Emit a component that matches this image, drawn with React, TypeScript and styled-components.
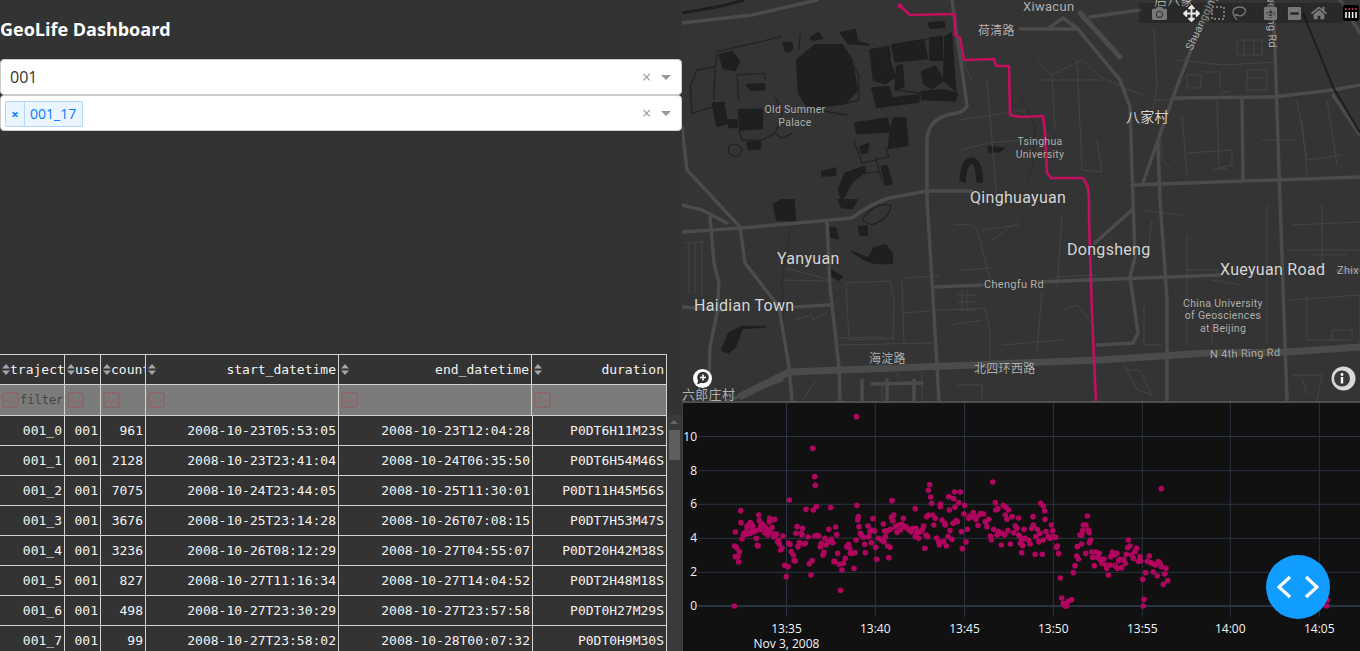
import React from 'react';
import styled, { createGlobalStyle } from 'styled-components';
import { FaCamera, FaArrowsAlt, FaPlusSquare, FaMinusSquare, FaHome } from 'react-icons/fa';

const GlobalStyle = createGlobalStyle`
  html, body {
    margin: 0;
    padding: 0;
    background: #333333;
    overflow: hidden;
  }
`

const Page = styled.div`
  position: relative;
  display: grid;
  grid-template-columns: 682px 678px;
  width: 1360px;
  height: 651px;
  overflow: hidden;
  background: #333333;
`

const LeftColumn = styled.div`
  display: flex;
  flex-direction: column;
  height: 651px;
  overflow: hidden;

  & > * {
    flex: none;
  }
`

const RightColumn = styled.div`
  display: flex;
  flex-direction: column;
  height: 651px;
  overflow: hidden;
`

const Title = styled.h1`
  margin: 0;
  height: 59px;
  padding-top: 17px;
  box-sizing: border-box;
  font-family: "Open Sans", sans-serif;
  font-size: 18px;
  line-height: 24px;
  font-weight: 700;
  color: #ffffff;
  white-space: nowrap;
`

const Dropdown = styled.div`
  display: flex;
  align-items: center;
  box-sizing: border-box;
  width: 682px;
  height: 36px;
  padding-left: 4px;
  background: #ffffff;
  border: 1px solid #cccccc;
  border-radius: 4px;
  font-family: "Open Sans", sans-serif;
`

const DropdownValue = styled.span`
  flex: 1;
  padding-left: 5px;
  font-size: 16px;
  color: #333333;
`

const TagRow = styled.div`
  flex: 1;
  display: flex;
  padding-top: 2px;
`

const Tag = styled.div`
  display: flex;
  align-items: stretch;
  height: 26px;
  box-sizing: border-box;
  border: 1px solid rgba(0, 126, 255, 0.24);
  border-radius: 2px;
  background: rgba(0, 126, 255, 0.08);
  color: #007eff;
  font-size: 14px;
  line-height: 24px;
`

const TagClear = styled.span`
  width: 18px;
  text-align: center;
  font-size: 13px;
  font-weight: 700;
  border-right: 1px solid rgba(0, 126, 255, 0.24);
`

const TagLabel = styled.span`
  padding: 0 6px 0 5px;
`

const Clear = styled.span`
  width: 17px;
  margin-right: 2px;
  text-align: center;
  font-size: 16px;
  color: #999999;
`

const Caret = styled.span`
  width: 0;
  height: 0;
  margin: 0 10px 0 4px;
  border-style: solid;
  border-width: 5px 5px 0;
  border-color: #999999 transparent transparent;
`

const TableArea = styled.div`
  display: flex;
  margin-top: 223px;
`

const Table = styled.div`
  width: 667px;
  border-top: 1px solid #d3d3d3;
  font-family: "DejaVu Sans Mono", monospace;
  font-size: 13px;
  color: #f4f4f4;
`

const Row = styled.div<{ $kind: 'head' | 'filter' | 'body' }>`
  display: grid;
  grid-template-columns: ${({ $kind }) => ($kind === 'body' ? '65px 36px 45px 193px 194px 134px' : '65px 36px 45px 193px 193px 135px')};
  box-sizing: border-box;
  height: ${({ $kind }) => ($kind === 'filter' ? '31px' : '30px')};
  border-bottom: 1px solid #d3d3d3;
  background: ${({ $kind }) => ($kind === 'filter' ? '#7b7b7b' : '#333333')};
`

const Cell = styled.div`
  box-sizing: border-box;
  padding-right: 2px;
  border-right: 1px solid #d3d3d3;
  overflow: hidden;
  line-height: 29px;
  text-align: right;
  white-space: nowrap;
`

const HeadCell = styled(Cell)`
  display: flex;
  align-items: center;
  padding-left: 2px;
`

const HeadLabel = styled.span<{ $wide: boolean }>`
  flex: ${({ $wide }) => ($wide ? 1 : 'none')};
`

const SortIcon = styled.svg`
  flex: none;
  width: 8px;
  height: 11px;
`

const FilterCell = styled(Cell)`
  display: flex;
  align-items: center;
  padding-left: 2px;
  font-size: 12px;
  color: #444444;
`

const CaseToggle = styled.span`
  flex: none;
  box-sizing: border-box;
  width: 17px;
  height: 16px;
  margin-right: 1px;
  border: 2px solid rgba(170, 60, 70, 0.3);
  border-radius: 3px;
  font-family: "Open Sans", sans-serif;
  font-size: 10px;
  line-height: 12px;
  text-align: center;
  color: rgba(170, 60, 70, 0.3);
`

const Track = styled.div`
  position: relative;
  width: 15px;
  margin-top: 61px;
  height: 240px;
  background: #3a3a3a;
`

const TrackArrow = styled.span`
  position: absolute;
  top: 5px;
  left: 3px;
  width: 0;
  height: 0;
  border-style: solid;
  border-width: 0 4px 4px;
  border-color: transparent transparent #666666;
`

const Thumb = styled.span`
  position: absolute;
  top: 15px;
  left: 2px;
  width: 11px;
  height: 30px;
  background: #5e5e5e;
`

const MapPane = styled.div`
  position: relative;
  height: 401px;
  background: #343434;
  overflow: hidden;
`

const MapCanvas = styled.svg`
  display: block;
  width: 678px;
  height: 401px;
`

const MapLabel = styled.text<{ $size: number }>`
  font-family: Roboto, "Noto Sans CJK SC", sans-serif;
  font-size: ${({ $size }) => $size}px;
  fill: ${({ $size }) => ($size > 13 ? '#d6d6d6' : '#b2b2b2')};
  stroke: #2c2c2c;
  stroke-width: 0.6px;
  paint-order: stroke;
  letter-spacing: 0.3px;
`

const ModeBar = styled.div`
  position: absolute;
  top: 3px;
  left: 457px;
  display: flex;
  align-items: center;
  width: 204px;
  height: 20px;
  background: rgba(0, 0, 0, 0.2);
`

const ModeButton = styled.span<{ $gap: number; $active?: boolean }>`
  flex: none;
  display: flex;
  align-items: center;
  justify-content: center;
  width: 21px;
  height: 20px;
  margin-left: ${({ $gap }) => $gap}px;
  font-size: 15px;
  color: ${({ $active }) => ($active ? '#e6e6e6' : '#777777')};
`

const PlotlyLogo = styled.svg`
  flex: none;
  width: 16px;
  height: 16px;
  margin-left: 14px;
`

const MapBadge = styled.svg<{ $side: 'left' | 'right' }>`
  position: absolute;
  top: ${({ $side }) => ($side === 'left' ? '369px' : '366px')};
  ${({ $side }) => ($side === 'left' ? 'left: 11px;' : 'right: 4px;')}
  width: ${({ $side }) => ($side === 'left' ? '19px' : '25px')};
  height: ${({ $side }) => ($side === 'left' ? '19px' : '25px')};
`

const ChartPane = styled.div`
  flex: 1;
  border-top: 2px solid #4f4f4f;
  border-left: 1px solid #3f3f3f;
  background: #111111;
`

const ChartCanvas = styled.svg`
  display: block;
  width: 677px;
  height: 248px;
`

const TickLabel = styled.text`
  font-family: "Open Sans", sans-serif;
  font-size: 12px;
  fill: #f2f5fa;
`

const DebugButton = styled.div`
  position: absolute;
  left: 1266px;
  top: 555px;
  display: flex;
  align-items: center;
  justify-content: center;
  width: 64px;
  height: 64px;
  border-radius: 50%;
  background: #119dff;
`

const columns = ['traject', 'use', 'count', 'start_datetime', 'end_datetime', 'duration']

const rows = [
  ['001_0', '001', '961', '2008-10-23T05:53:05', '2008-10-23T12:04:28', 'P0DT6H11M23S'],
  ['001_1', '001', '2128', '2008-10-23T23:41:04', '2008-10-24T06:35:50', 'P0DT6H54M46S'],
  ['001_2', '001', '7075', '2008-10-24T23:44:05', '2008-10-25T11:30:01', 'P0DT11H45M56S'],
  ['001_3', '001', '3676', '2008-10-25T23:14:28', '2008-10-26T07:08:15', 'P0DT7H53M47S'],
  ['001_4', '001', '3236', '2008-10-26T08:12:29', '2008-10-27T04:55:07', 'P0DT20H42M38S'],
  ['001_5', '001', '827', '2008-10-27T11:16:34', '2008-10-27T14:04:52', 'P0DT2H48M18S'],
  ['001_6', '001', '498', '2008-10-27T23:30:29', '2008-10-27T23:57:58', 'P0DT0H27M29S'],
  ['001_7', '001', '99', '2008-10-27T23:58:02', '2008-10-28T00:07:32', 'P0DT0H9M30S'],
]

// major roads, map pane pixels
const bigRoads = [
  'M270 0 L274 30 L280 70 L285 105 Q284 112 270 114 Q246 118 245 140 L245 200 L250 280 L257 401',
  'M0 23 L70 15 L135 0',
  'M0 232 L60 228 L170 218 Q190 203 207 198 L245 191 L290 191',
  'M33 200 L58 227 L63 263 L97 307 L107 367 L110 401',
  'M0 127 L5 170 L33 200',
  'M0 205 L20 210 L45 223',
  'M28 217 L32 263 L37 283 L35 313 L28 347 L27 377',
  'M0 307 L40 310 M113 307 L147 305',
  'M145 223 L148 287 L157 367 L158 401',
  'M253 287 L300 285 M355 282 L538 275 M655 271 L678 270',
  'M408 17 L458 10',
  'M338 29 L395 29',
  'M368 27 L381 18 L395 28 L438 80 L448 107 L451 200 L453 257 L448 277 L456 333 L451 343 L415 345',
  'M528 0 L491 97 L461 183',
  'M450 210 L413 243',
  'M476 143 L478 200 L485 300 L485 401',
  'M591 0 L593 50 L598 200 L605 401',
  'M493 98 L591 97 L651 90 L678 85',
  'M450 185 L678 177',
  'M560 98 L561 180',
  'M658 0 L678 33',
  'M651 95 L678 135',
  'M180 380 L180 401 M205 380 L205 401 M232 380 L232 401',
  'M190 384 L240 383',
]

const minorRoads = [
  'M7 243 L7 294 M13 243 L13 294 M20 243 L20 294 M2 243 L22 242',
  'M100 267 L148 280 M100 280 L147 281',
  'M163 283 L208 281 L212 300 L211 340 M165 340 L212 338 M167 339 L164 283',
  'M220 280 L222 345 M220 278 L258 276 M222 313 L258 310',
  'M155 338 L200 337 M157 345 L250 343',
  'M112 320 L130 315 L132 320 M130 320 L146 312',
  'M272 225 L290 224 L295 230 L310 286 M300 230 L338 225 M280 270 L310 268 M310 240 L338 220',
  'M275 295 L295 295 M275 302 L295 302 M275 310 L295 310 M280 290 L280 310 M285 290 L285 310',
  'M260 310 L303 308 L308 330 L308 360 M268 325 L300 320 M320 345 L380 340',
  'M275 50 L290 80 M277 120 L345 110 M280 150 L305 143 L340 140 M305 80 L315 200',
  'M355 60 L370 75 L400 60 L420 78 L460 95 M370 75 L373 130 M395 60 L400 170 L420 172',
  'M360 80 L420 80 M415 140 L420 172',
  'M472 28 L475 88 L470 115 L463 120 M472 100 L500 100 M478 125 L480 160 L490 170',
  'M495 60 L540 65 L595 62 M505 75 L520 75 L518 88 L505 88Z M520 72 L538 72 L538 88 M540 92 L548 92 M565 70 L585 70 L585 90 L565 90Z M565 78 L585 78',
  'M555 40 L580 40 L580 55 L555 55Z M562 40 L562 55 M572 40 L572 55',
  'M500 115 L505 175 M535 100 L537 170 L545 168 M505 153 L550 150 L550 165 L530 170',
  'M620 120 L625 175 M645 100 L655 165 M580 140 L615 140 M615 100 L625 160 L660 155',
  'M380 215 L375 290 M360 290 L355 350 M373 277 L415 275 M380 310 L395 305 L412 325',
  'M460 210 L500 215 M470 220 L465 260 M462 305 L462 345 L480 345 M505 235 L505 345',
  'M505 270 L535 270 L535 280 M530 280 L560 285 M500 305 L530 305 L530 345',
  'M585 205 L585 345 M605 250 L678 250 M608 300 L678 295 L678 345 M625 295 L625 340 L660 340 M650 330 L670 330 L670 340 L650 340Z',
  'M610 225 L678 222 M640 205 L640 270 M630 255 L665 255',
  'M440 360 L455 390 L470 395 L458 370 L443 370',
  'M610 375 L640 375 L635 401 M620 378 L625 395',
  'M190 370 L210 370 L220 378 M240 372 L240 401 M200 385 L200 401',
  'M120 400 L135 380 M125 370 L150 368',
  'M275 385 L300 385 L300 400',
]

const darkBlobs = [
  'M345 180 L400 135 L480 135 L510 180 L525 270 L490 310 L380 325 L350 280Z',
  'M112 165 L150 155 L172 185 L160 210 L125 205Z',
  'M305 130 L330 128 L330 150 L312 155Z',
  'M385 115 L410 98 L420 115 L395 120Z',
  'M475 98 L520 90 L525 125 L560 135 L500 130Z',
  'M565 150 L620 140 L625 190 L640 230 L610 250 L575 240Z',
  'M630 135 L725 120 L735 175 L640 185Z',
  'M745 115 L780 110 L780 180 L745 180Z',
  'M790 110 L808 100 L815 200 L820 270 L785 240Z',
  'M720 215 L760 200 L785 240 L750 265 L725 250Z',
  'M645 200 L660 195 L665 260 L640 270Z',
  'M570 265 L620 260 L630 295 L710 285 L710 305 L585 322Z',
  'M718 275 L780 270 L825 280 L820 302 L720 298Z',
  'M740 70 L785 65 L788 80 L745 85Z',
  'M195 255 L245 252 L248 268 L205 270Z',
  'M92 310 L125 308 L135 370 L105 378Z',
  'M170 330 L240 328 L240 385 L175 390Z',
  'M195 428 L235 425 L235 445 L200 448Z',
  'M140 360 L165 360 L165 382 L142 382Z',
  'M520 370 L615 355 L625 395 L525 400Z',
  'M635 355 L670 355 L678 435 L620 445 L625 395Z',
  'M535 440 L560 432 L555 458 L538 458Z',
  'M420 515 L460 505 L460 525 L420 527Z',
  'M470 570 L490 520 L545 500 L550 515 L510 545 L480 600Z',
  'M600 500 L615 498 L630 550 L610 555Z',
  'M920 440 L965 445 L950 455 L920 455Z',
  'M835 540 Q840 475 870 475 Q900 480 900 545 L885 545 Q885 490 870 490 Q852 490 848 545Z',
  'M275 615 L300 600 L335 600 L340 660 L285 660Z',
  'M470 600 L525 600 L510 625 L480 622Z',
  'M445 685 L460 685 L468 715 L448 712Z',
  'M510 755 L560 775 L575 745 L610 735 L630 760 L630 790 L580 790 L550 780Z',
  'M445 810 L480 830 L470 840 L450 828Z',
  'M120 1050 L140 1000 L180 980 L250 980 L180 985 L160 1040 L140 1058Z',
  'M530 680 L555 678 L555 705 L535 705Z',
  'M1860 1755 L1878 1755 L1878 1780 L1862 1780Z',
]

const parkPaths = [
  'M300 110 L105 155 M105 155 L100 200 L45 210 L25 260 L30 340 L95 320',
  'M100 205 L95 300 M160 225 L245 220 L250 240 M165 225 L170 300 M280 290 L300 340 L280 400 L300 415 L330 400',
  'M170 390 L180 420 L240 420 L280 400 M140 440 Q150 425 175 440 Q190 460 160 470 Q135 465 140 440',
  'M355 100 L350 150 M490 310 L530 300 L530 225 L510 190 M380 325 L495 345',
  'M515 420 L540 490 L620 470 L610 440 M540 520 L600 515 M580 470 L600 545',
  'M540 660 Q570 610 625 615 Q630 650 570 675 L540 660',
  'M600 140 L620 200 M725 120 L745 115 M640 270 L720 280',
]

const thinDark = [
  'M338 93 L353 127 L351 167 L345 180',
  'M108 227 L100 280 L102 333',
]

const route = 'M217 5 L228 15 L273 14 L273 35 L278 38 L282 60 L312 59 L314 66 L327 66 L328 115 L338 117 L361 116 L363 133 L365 173 L369 178 L401 178 L406 187 L407 200 L407 220 L409 283 L410 313 L412 360 L414 401'

// reference pixels x3 from the speed trace, first part of the trip
const pointsA: [number, number][] = [
  [157,618],[160,396],[176,332],[177,368],[158,438],[163,442],[160,470],[168,470],[172,455],[170,486],[180,417],[184,405],[186,400],[195,380],[193,395],[200,375],[205,368],[208,372],[212,378],[196,402],[205,400],[215,395],[222,392],[210,390],[223,415],[226,436],[228,438],[230,345],[232,362],[236,378],[240,372],[246,378],[235,388],[248,398],[252,385],[258,405],[263,355],[262,365],[268,360],[278,358],[270,383],[264,395],[278,402],[275,410],[283,403],[287,425],[292,432],[290,420],[296,450],[300,445],[303,408],[308,496],[318,500],[313,530],[322,300],[320,430],[324,433],[328,455],[334,465],[336,482],[340,483],[345,380],[342,400],[348,440],[352,428],[358,400],[362,385],[360,405],[365,432],[370,430],[372,328],[378,411],[387,525],[382,491],[390,482],[392,145],[398,230],[400,256],[394,330],[403,320],[398,408],[405,406],[410,408],[415,440],[418,430],[423,465],[426,457],[429,415],[432,435],[438,425],[440,388],[446,323],[448,418],[452,428],[456,485],[461,381],[464,404],[467,460],[458,483],[471,493],[475,571],[480,510],[484,490],[490,475],[494,440],[500,433],[503,445],[505,460],[511,460],[519,458],[516,505],[522,420],[523,50],[525,316],[527,360],[529,350],[531,380],[535,400],[537,405],[545,412],[548,433],[550,458],[558,378],[560,410],[564,395],[570,390],[568,428],[573,356],[578,393],[581,442],[584,478],[590,415],[598,420],[606,425],[604,372],[608,393],[610,410],[615,393],[617,438],[620,473],[624,442],[628,352],[630,302],[632,362],[635,345],[625,388],[640,380],[645,397],[650,375],[655,390],[660,373],[664,355],[665,378],[670,380],[676,385],[682,390],[688,395],[692,385],[700,326],[702,385],[700,410],[705,398],[710,415],[716,395],[722,388],[725,378],[728,445],[732,405],[737,410],[734,350],[740,345],[739,271],[743,254],[746,291],[749,310],[752,345],[755,375],[760,355],[764,414],[770,425],[772,435],[775,320],[776,312],[780,360],[785,425],[788,370],[790,375],[793,438],[798,410],[800,290],[802,330],[804,392],[810,418],[813,370],[815,296],[817,276],[819,322],[822,362],[826,365],[830,308],[835,276],[838,395],[841,446],[848,316],[852,426],[846,342],[856,388],[860,355],[865,348],[870,350],[874,338],[878,352],[882,358],[888,376],[892,345],[897,340],[905,342],[910,365],[915,380],[920,358],[925,408],[928,420],[932,246],[935,388],[940,308],[942,330],[948,326],[945,405],[950,395],[958,435],[960,400],[964,316],[968,405],[972,322],[980,330],[970,345],[985,432],[990,350],[978,392],[975,358],[995,398],[1000,378],[1005,385],[1010,354],[1010,405],[1015,430],
]

// second part, offset by 1014
const pointsB: [number, number][] = [
  [0,410],[5,420],[8,437],[5,458],[12,388],[15,415],[25,420],[30,432],[35,385],[40,375],[39,350],[45,463],[48,410],[52,388],[56,425],[60,400],[62,310],[70,318],[74,333],[75,358],[67,463],[70,420],[78,395],[85,410],[90,415],[94,375],[98,392],[100,410],[107,412],[110,442],[112,438],[116,461],[121,534],[125,594],[130,610],[135,618],[140,618],[145,604],[155,599],[160,518],[165,497],[170,468],[172,440],[175,477],[180,405],[185,405],[185,432],[190,375],[188,392],[197,460],[198,375],[202,348],[205,390],[208,398],[208,428],[212,420],[215,456],[218,472],[223,497],[228,456],[232,472],[238,460],[240,478],[246,490],[252,477],[258,495],[260,505],[265,525],[270,495],[272,470],[277,456],[283,465],[290,460],[285,497],[292,505],[296,482],[300,478],[305,503],[310,478],[316,490],[319,463],[323,443],[325,420],[330,438],[335,465],[340,475],[345,455],[350,445],[355,484],[360,470],[362,483],[368,538],[372,598],[370,618],[377,518],[382,484],[388,468],[392,488],[400,516],[400,492],[406,495],[412,528],[415,485],[420,490],[424,500],[424,266],[430,553],[434,522],[438,505],[443,542],[920,618],[923,600],
]

const speedPoints = [...pointsA, ...pointsB.map(([x, y]): [number, number] => [x + 1014, y])]

const yTicks = [
  { label: '0', y: 206 },
  { label: '2', y: 172.3 },
  { label: '4', y: 138.3 },
  { label: '6', y: 104.3 },
  { label: '8', y: 70.7 },
  { label: '10', y: 36.5 },
]

const xTicks = [
  { label: '13:35', x: 104.5 },
  { label: '13:40', x: 193.3 },
  { label: '13:45', x: 282.5 },
  { label: '13:50', x: 371.3 },
  { label: '13:55', x: 460.3 },
  { label: '14:00', x: 548.3 },
  { label: '14:05', x: 637.3 },
]

const SortArrows = () => (
  <SortIcon viewBox="0 0 8 11">
    <path d="M4 0 L8 4.5 L0 4.5Z M4 11 L8 6.5 L0 6.5Z" fill="#a5a5a5" />
  </SortIcon>
)

const CityMap = () => (
  <MapCanvas viewBox="0 0 678 401">
    <g transform="scale(0.3333)" fill="#1e1f1e" stroke="#1e1f1e" strokeWidth="6" strokeLinejoin="round">
      {darkBlobs.map((d) => <path key={d} d={d} />)}
    </g>
    <g transform="scale(0.3333)" fill="none" stroke="#222322" strokeWidth="4">
      {parkPaths.map((d) => <path key={d} d={d} />)}
    </g>
    <g fill="none" stroke="#444444" strokeWidth="1">
      {minorRoads.map((d) => <path key={d} d={d} />)}
    </g>
    <g fill="none" stroke="#2a2a2a" strokeWidth="1">
      {thinDark.map((d) => <path key={d} d={d} />)}
    </g>
    <path d="M0 13 L40 6 L62 0" fill="none" stroke="#1e1e1e" strokeWidth="3" />
    <g fill="none" stroke="#4b4b4b" strokeWidth="3.5" strokeLinecap="round">
      {bigRoads.map((d) => <path key={d} d={d} />)}
      <path d="M398 13 L438 57" strokeWidth="5" />
      <path d="M57 397 L107 372 L293 365 L338 363 L418 360 L525 353 L605 352 L678 347" strokeWidth="7" strokeLinecap="butt" />
      <path d="M45 401 L100 380" strokeWidth="3" />
    </g>
    <path d="M621 13 L651 87 L678 133" fill="none" stroke="#1e1e1e" strokeWidth="2" />
    <path d={route} fill="none" stroke="#c2105e" strokeWidth="2.6" strokeLinejoin="round" />
    <circle cx="218" cy="6" r="2.5" fill="#c2105e" />
    <MapLabel $size={13} x="341" y="11">Xiwacun</MapLabel>
    <MapLabel $size={12} x="296" y="35">荷清路</MapLabel>
    <MapLabel $size={14} x="444" y="122">八家村</MapLabel>
    <MapLabel $size={13} x="472" y="5">后八家</MapLabel>
    <MapLabel $size={10.5} x="113" y="113" textAnchor="middle">Old Summer</MapLabel>
    <MapLabel $size={10.5} x="113" y="126" textAnchor="middle">Palace</MapLabel>
    <MapLabel $size={10.5} x="358" y="145" textAnchor="middle">Tsinghua</MapLabel>
    <MapLabel $size={10.5} x="358" y="158" textAnchor="middle">University</MapLabel>
    <MapLabel $size={16} x="288" y="203">Qinghuayuan</MapLabel>
    <MapLabel $size={16} x="385" y="255">Dongsheng</MapLabel>
    <MapLabel $size={16} x="95" y="264">Yanyuan</MapLabel>
    <MapLabel $size={16} x="12" y="311">Haidian Town</MapLabel>
    <MapLabel $size={16} x="538" y="275">Xueyuan Road</MapLabel>
    <MapLabel $size={11} x="655" y="274">Zhix</MapLabel>
    <MapLabel $size={11} x="302" y="288">Chengfu Rd</MapLabel>
    <MapLabel $size={10.5} x="541" y="307" textAnchor="middle">China University</MapLabel>
    <MapLabel $size={10.5} x="541" y="319" textAnchor="middle">of Geosciences</MapLabel>
    <MapLabel $size={10.5} x="541" y="332" textAnchor="middle">at Beijing</MapLabel>
    <MapLabel $size={11} x="528" y="358" transform="rotate(-1.5 528 358)">N 4th Ring Rd</MapLabel>
    <MapLabel $size={12} x="292" y="373">北四环西路</MapLabel>
    <MapLabel $size={12} x="187" y="363">海淀路</MapLabel>
    <MapLabel $size={13} x="0" y="399">六郎庄村</MapLabel>
    <MapLabel $size={11} x="510" y="51" transform="rotate(-65 510 51)">Shuangqing Rd</MapLabel>
    <MapLabel $size={11} x="587" y="48" textAnchor="end" transform="rotate(88 587 48)">Xueqing Rd</MapLabel>
  </MapCanvas>
)

const ToolBar = () => (
  <ModeBar>
    <ModeButton $gap={10}><FaCamera /></ModeButton>
    <ModeButton $gap={11} $active><FaArrowsAlt size={17} /></ModeButton>
    <ModeButton $gap={5}>
      <svg width="14" height="14" viewBox="0 0 14 14">
        <rect x="1" y="1" width="12" height="12" fill="none" stroke="#777777" strokeWidth="2" strokeDasharray="2 2" />
      </svg>
    </ModeButton>
    <ModeButton $gap={0}>
      <svg width="16" height="16" viewBox="0 0 16 16">
        <path d="M4 11 C0 8 2 2 9 2 C14 2 16 6 13 9 C11 11 8 11 6 10 M4 11 C3 13 5 13 6 15 M4 11 C5 9 7 9 6 11" fill="none" stroke="#777777" strokeWidth="1.3" />
      </svg>
    </ModeButton>
    <ModeButton $gap={11}><FaPlusSquare /></ModeButton>
    <ModeButton $gap={3}><FaMinusSquare /></ModeButton>
    <ModeButton $gap={3}><FaHome size={16} /></ModeButton>
    <PlotlyLogo viewBox="0 0 16 16">
      <rect width="16" height="16" rx="2" fill="#000000" />
      <g strokeWidth="1.5" stroke="#ffffff">
        <path d="M3 7 V13 M6.3 7 V13 M9.6 7 V13 M13 7 V13" />
      </g>
      <g fill="#e0347a">
        <circle cx="3" cy="4" r="0.9" />
        <circle cx="6.3" cy="4" r="0.9" />
        <circle cx="9.6" cy="4" r="0.9" />
        <circle cx="13" cy="4" r="0.9" />
      </g>
    </PlotlyLogo>
  </ModeBar>
)

const SpeedChart = () => (
  <ChartCanvas viewBox="1 3 677 248">
    <g stroke="#283442" strokeWidth="1" fill="none">
      {yTicks.slice(1).map((t) => <line key={t.label} x1="16" x2="678" y1={t.y} y2={t.y} />)}
      {xTicks.map((t) => <line key={t.label} x1={t.x} x2={t.x} y1="3" y2="217" />)}
      <line x1="16" x2="678" y1="206" y2="206" strokeWidth="2" />
    </g>
    <g fill="#b0055e">
      {speedPoints.map(([x, y], i) => <circle key={i} cx={x / 3} cy={y / 3} r="2.8" />)}
    </g>
    {yTicks.map((t) => (
      <TickLabel key={t.label} x="15" y={t.y + 4} textAnchor="end">{t.label}</TickLabel>
    ))}
    {xTicks.map((t) => (
      <TickLabel key={t.label} x={t.x} y="233" textAnchor="middle">{t.label}</TickLabel>
    ))}
    <TickLabel x="104.5" y="248" textAnchor="middle">Nov 3, 2008</TickLabel>
  </ChartCanvas>
)

const App = () => (
  <Page>
    <GlobalStyle />
    <LeftColumn>
      <Title>GeoLife Dashboard</Title>
      <Dropdown>
        <DropdownValue>001</DropdownValue>
        <Clear>×</Clear>
        <Caret />
      </Dropdown>
      <Dropdown>
        <TagRow>
          <Tag>
            <TagClear>×</TagClear>
            <TagLabel>001_17</TagLabel>
          </Tag>
        </TagRow>
        <Clear>×</Clear>
        <Caret />
      </Dropdown>
      <TableArea>
        <Table>
          <Row $kind="head">
            {columns.map((c, i) => (
              <HeadCell key={c}>
                <SortArrows />
                <HeadLabel $wide={i > 2}>{c}</HeadLabel>
              </HeadCell>
            ))}
          </Row>
          <Row $kind="filter">
            {columns.map((c, i) => (
              <FilterCell key={c}>
                <CaseToggle>Aa</CaseToggle>
                {i === 0 ? 'filter' : ''}
              </FilterCell>
            ))}
          </Row>
          {rows.map((r) => (
            <Row $kind="body" key={r[0]}>
              {r.map((v, i) => <Cell key={i}>{v}</Cell>)}
            </Row>
          ))}
        </Table>
        <Track>
          <TrackArrow />
          <Thumb />
        </Track>
      </TableArea>
    </LeftColumn>
    <RightColumn>
      <MapPane>
        <CityMap />
        <ToolBar />
        <MapBadge $side="left" viewBox="0 0 19 19">
          <circle cx="9.5" cy="9.5" r="9.5" fill="#ffffff" />
          <circle cx="10" cy="8.5" r="5.8" fill="#333333" />
          <path d="M5.5 11 L4 15.5 L9 13.5Z" fill="#333333" />
          <path d="M10 5.5 V11.5 M7 8.5 H13" stroke="#ffffff" strokeWidth="1.6" />
        </MapBadge>
        <MapBadge $side="right" viewBox="0 0 25 25">
          <circle cx="12.5" cy="12.5" r="12" fill="#d8d8d8" />
          <circle cx="11" cy="12.5" r="8" fill="#3a3a3a" />
          <circle cx="11" cy="8.5" r="1.4" fill="#ffffff" />
          <rect x="9.8" y="11" width="2.4" height="6.5" fill="#ffffff" />
        </MapBadge>
      </MapPane>
      <ChartPane>
        <SpeedChart />
      </ChartPane>
    </RightColumn>
    <DebugButton>
      <svg width="42" height="24" viewBox="0 0 42 24" fill="none" stroke="#ffffff" strokeWidth="3.2">
        <path d="M13 2 L2 12 L13 22 M29 2 L40 12 L29 22" />
      </svg>
    </DebugButton>
  </Page>
);

export default App;
